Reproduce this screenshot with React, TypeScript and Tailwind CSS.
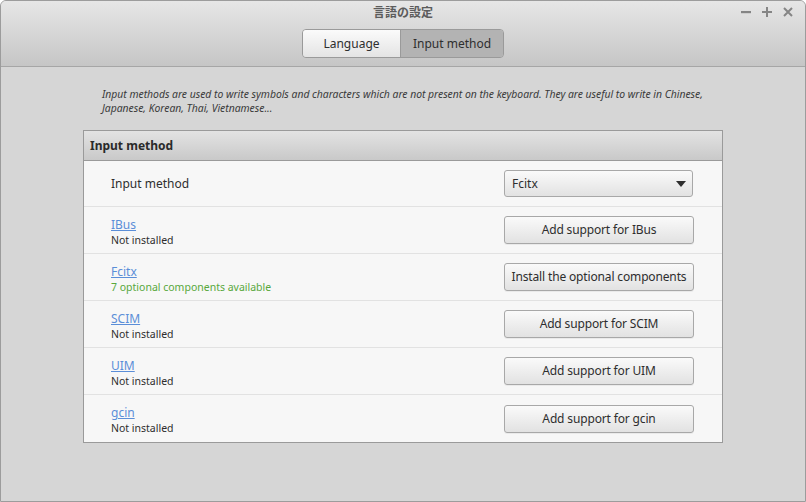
interface Method {
  name: string;
  status: string;
  action: string;
  optional?: boolean;
}

const methods: Method[] = [
  { name: "IBus", status: "Not installed", action: "Add support for IBus" },
  {
    name: "Fcitx",
    status: "7 optional components available",
    action: "Install the optional components",
    optional: true,
  },
  { name: "SCIM", status: "Not installed", action: "Add support for SCIM" },
  { name: "UIM", status: "Not installed", action: "Add support for UIM" },
  { name: "gcin", status: "Not installed", action: "Add support for gcin" },
];

const btn =
  "h-[28px] w-[190px] whitespace-nowrap rounded-[3px] border border-[#a8a8a8] bg-gradient-to-b from-[#fafafa] to-[#e2e2e2] text-[12px] tracking-[-0.15px] text-[#2e2e2e] shadow-[0_1px_0_rgba(0,0,0,0.05)]";

export default function App() {
  return (
    <div
      className="flex h-[502px] w-[806px] flex-col overflow-hidden rounded-t-[6px] border border-[#9c9c9c] bg-[#d6d6d6]"
      style={{ fontFamily: '"Noto Sans", "Noto Sans CJK JP", sans-serif' }}
    >
      {/* header bar */}
      <div className="flex h-[66px] shrink-0 flex-col border-b border-[#a6a6a6] bg-gradient-to-b from-[#e6e6e6] to-[#c6c6c6]">
        <div className="relative flex h-[24px] items-center justify-center">
          <span className="text-[12px] font-bold text-[#5c5c5c]">言語の設定</span>
          <div className="absolute right-[12px] top-[6px] flex items-center gap-[11px] text-[#858585]">
            <svg width="10" height="10" viewBox="0 0 10 10">
              <rect x="0" y="4" width="10" height="2.2" fill="currentColor" />
            </svg>
            <svg width="10" height="10" viewBox="0 0 10 10">
              <rect x="0" y="4" width="10" height="2" fill="currentColor" />
              <rect x="4" y="0" width="2" height="10" fill="currentColor" />
            </svg>
            <svg width="10" height="10" viewBox="0 0 10 10">
              <path d="M1 1 L9 9 M9 1 L1 9" stroke="currentColor" strokeWidth="2" />
            </svg>
          </div>
        </div>
        <div className="mt-[4px] flex justify-center">
          <div className="flex h-[29px] overflow-hidden rounded-[4px] border border-[#9a9a9a] text-[12px] text-[#2e2e2e]">
            <button className="w-[98px] border-r border-[#9a9a9a] bg-gradient-to-b from-[#fbfbfb] to-[#e4e4e4]">
              Language
            </button>
            <button className="w-[102px] bg-[#b3b3b3]">Input method</button>
          </div>
        </div>
      </div>

      {/* content */}
      <div className="flex flex-col px-[82px] pt-[20px]">
        <p className="pl-[19px] pr-[4px] text-[10.4px] italic leading-[14px] tracking-[-0.02px] text-[#3a3a3a]">
          Input methods are used to write symbols and characters which are not present on the
          keyboard. They are useful to write in Chinese, Japanese, Korean, Thai, Vietnamese...
        </p>

        <div className="mt-[15px] flex flex-col border border-[#9a9a9a] bg-[#f7f7f7]">
          <div className="flex h-[30px] items-center border-b border-[#9a9a9a] bg-gradient-to-b from-[#e3e3e3] to-[#c9c9c9] px-[6px] text-[12px] font-bold text-[#2a2a2a]">
            Input method
          </div>

          <div className="flex h-[46px] items-center justify-between border-b border-[#e2e2e2] pl-[27px] pr-[29px]">
            <span className="text-[12px] text-[#2e2e2e]">Input method</span>
            <button className="flex h-[27px] w-[189px] items-center justify-between rounded-[3px] border border-[#a8a8a8] bg-gradient-to-b from-[#fafafa] to-[#e2e2e2] pl-[7px] pr-[6px] text-[12px] text-[#2e2e2e]">
              Fcitx
              <svg width="10" height="6" viewBox="0 0 10 6">
                <path d="M0 0 L10 0 L5 6 Z" fill="#2e2e2e" />
              </svg>
            </button>
          </div>

          {methods.map((m, i) => (
            <div
              key={m.name}
              className={`flex h-[47px] items-center justify-between pl-[27px] pr-[28px] ${
                i < methods.length - 1 ? "border-b border-[#e2e2e2]" : ""
              }`}
            >
              <div className="flex flex-col pt-[3px]">
                <a className="text-[12px] leading-[16px] text-[#5b8ed8] underline">{m.name}</a>
                <span
                  className={`text-[10.5px] leading-[14px] ${
                    m.optional ? "text-[#58a83c]" : "text-[#2e2e2e]"
                  }`}
                >
                  {m.status}
                </span>
              </div>
              <button className={btn}>{m.action}</button>
            </div>
          ))}
        </div>
      </div>
    </div>
  );
}
